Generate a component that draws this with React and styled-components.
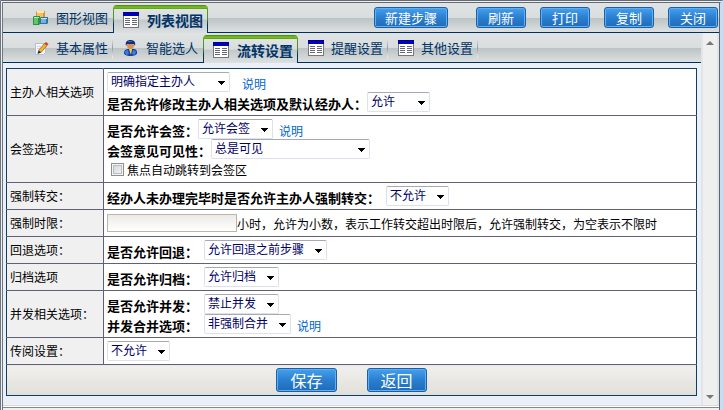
import React from 'react'
import styled, { createGlobalStyle, css } from 'styled-components'

const GlobalStyle = createGlobalStyle`
    * {
        box-sizing : border-box;
    }

    body {
        margin      : 0;
        background  : #ebeff8;
        font-family : "Noto Sans CJK SC", "Liberation Sans", sans-serif;
        font-size   : 12px;
        line-height : 20px;
        color       : #000;
    }
`;

const barGradient = 'linear-gradient(#dfe3e3, #d9dddd 50%, #bcc3c5 52%, #dde0e0)';

/* window frame */
const Frame = styled.div`
    display        : flex;
    flex-direction : column;
    min-height     : 100vh;
    border-top     : 3px double #666a72;
    border-left    : 3px double #70767e;
    border-right   : 3px solid #c9dcf0;
`;

const Inner = styled.div`
    flex           : 1;
    display        : flex;
    flex-direction : column;
    border-right   : 1px solid #5a6472;
`;

const Bar = styled.div`
    display         : flex;
    justify-content : space-between;
    height          : 30px;
    padding-left    : 20px;
    background      : ${barGradient};
    border-bottom   : 1px solid #003060;
`;

const Tabs = styled.nav`
    display : flex;
`;

const Tab = styled.a`
    display         : flex;
    align-items     : center;
    gap             : 7px;
    padding         : 0 5px 0 10px;
    font-size       : 13px;
    color           : #003366;
    text-decoration : none;
    white-space     : nowrap;

    ${({ $divider }) => $divider && css`
        background : linear-gradient(#e6eaea, #8e9cab 50%, #f0f2f2) no-repeat right 0 top 5px / 1px 20px;
    `}

    /* borders are painted by the second background, green fading to navy */
    ${({ $active }) => $active && css`
        gap           : 8px;
        margin        : 2px 0 -1px;
        padding       : 0 4px 3px 9px;
        font-size     : 14px;
        font-weight   : bold;
        background    :
            linear-gradient(#dfe3e3, #d9dddd 42%, #c2c8ca 46%, #dde0e0) padding-box,
            linear-gradient(#3f8010, #7fc226 2px, #5a9e10 4px, #4f8a30 50%, #00335f 70%) border-box;
        border        : 1px solid transparent;
        border-top    : 4px solid transparent;
        border-bottom : 0;
        border-radius : 4px 4px 0 0;
    `}
`;

const Tools = styled.div`
    display       : flex;
    align-items   : center;
    gap           : 14px;
    padding-right : 1px;
`;

const Button = styled.button`
    height        : 21px;
    padding       : 0 ${({ $lead }) => ($lead ? '10px' : '11px')};
    margin-right  : ${({ $lead }) => ($lead ? '14px' : '0')};
    font-family   : inherit;
    font-size     : 13px;
    line-height   : 17px;
    color         : #fff;
    white-space   : nowrap;
    background    : linear-gradient(#46a0ee, #2a7fd0 50%, #1f6cb8);
    border        : 1px solid #1a5fa8;
    border-radius : 3px;
    box-shadow    : inset 0 0 0 1px #5fb0f0;
`;

const BigButton = styled(Button)`
    height      : 24px;
    padding     : 0 13px;
    font-size   : 16px;
    line-height : 20px;
`;

const Body = styled.div`
    flex    : 1;
    display : flex;
`;

const Content = styled.main`
    flex           : 1;
    min-width      : 0;
    padding-bottom : 9px;
`;

const Scroll = styled.div`
    display         : flex;
    flex-direction  : column;
    justify-content : space-between;
    align-items     : center;
    width           : 18px;
    padding         : 8px 0 6px;
    background      : #efefef;
    border-left     : 2px solid #e2e4e6;
    border-right    : 2px solid #e4e4e6;
`;

const Status = styled.footer`
    height     : 5px;
    background : #f0f0f0;
    border-top : 1px solid #d8dade;
    box-shadow : inset 0 1px 0 #fff, inset 0 2px 0 #85888c;
`;

const FormBox = styled.form`
    padding : 5px 4px 0 3px;
`;

const Table = styled.table`
    width           : 100%;
    border          : 1px solid #0c3f66;
    border-collapse : collapse;
    background      : #fff;
`;

const Head = styled.th`
    width         : 97px;
    padding       : 3px;
    font-weight   : normal;
    text-align    : left;
    white-space   : nowrap;
    background    : #f0f0f0;
    border-right  : 1px solid #606078;
    border-bottom : 1px solid #606078;
`;

const Cell = styled.td`
    padding       : 3px;
    border-bottom : 1px solid #606078;
`;

const Foot = styled.td`
    height     : 30px;
    padding    : 3px;
    background : linear-gradient(#f1f0ed, #e2dfd9);
    border-top : 1px solid #0c3f66;
`;

const Actions = styled.div`
    display         : flex;
    justify-content : center;
    gap             : 30px;
`;

const Line = styled.div`
    display     : flex;
    align-items : center;
    height      : 20px;
    white-space : nowrap;
`;

const Strong = styled.label`
    padding-top  : 3px;
    margin-right : ${({ $gap }) => ($gap ? '6px' : '0')};
    font-size    : 13px;
    font-weight  : bold;
`;

const Help = styled.a`
    padding-top     : 3px;
    margin-left     : ${({ $far }) => ($far ? '12px' : '6px')};
    color           : #0066cc;
    text-decoration : none;
`;

const arrow = `url("data:image/svg+xml,%3Csvg xmlns='http://www.w3.org/2000/svg' width='7' height='4' shape-rendering='crispEdges'%3E%3Cpath d='M0 0h7v1H6v1H5v1H4v1H3V3H2V2H1V1H0z'/%3E%3C/svg%3E")`;

const Select = styled.select`
    appearance    : none;
    width         : ${({ $width }) => $width}px;
    height        : 20px;
    padding       : 0 0 2px 3px;
    font-family   : inherit;
    font-size     : 12px;
    line-height   : 16px;
    color         : #000066;
    background    : #fff ${arrow} no-repeat right 4px top 8px;
    border        : 1px solid #dde1ec;
    border-top    : 1px solid #a8a9b2;
    border-radius : 2px;
`;

const Hours = styled.input`
    width      : 130px;
    height     : 18px;
    padding    : 0 2px;
    font-size  : 12px;
    background : linear-gradient(#ebeae6, #fff);
    border     : 1px solid #bab6aa;
`;

const Note = styled.label`
    padding-top : 2px;
`;

const Check = styled.input`
    appearance : none;
    width      : 13px;
    height     : 13px;
    margin     : 0 3px 0 4px;
    background : linear-gradient(135deg, #cfd3d8, #f6f6f6);
    border     : 1px solid #8e8f8f;
    box-shadow : inset 0 0 0 1px #f4f4f4, inset 0 0 0 2px #b9bec4;
`;

/* icon */
const ListIcon = () => (
    <svg width="16" height="16" shapeRendering="crispEdges">
        <path fill="#fff" stroke="#777" d="M.5.5h15v15H.5z"/>
        <path fill="#0000c0" d="M0 0h16v4H0z"/>
        <path fill="#00007a" d="M0 0h16v1H0z"/>
        <path stroke="#667" d="M2 6.500h5M9 6.500h5M2 8.500h5M9 8.500h5M2 10.500h5M9 10.500h5M2 12.500h5M9 12.500h5"/>
    </svg>
)

const CubesIcon = () => (
    <svg width="16" height="16">
        <path fill="#d9962c" d="M3 2l1-1h8v7H3z"/>
        <path fill="#f5c060" d="M4 2h6v6H4z"/>
        <path fill="#ffe6a8" d="M4 1h7v2H4z"/>
        <path fill="#2a9440" d="M0 7l1-1h6v8l-1 1H0z"/>
        <path fill="#62c46c" d="M1 8h4v6H1z"/>
        <path fill="#b4ecb0" d="M1 7h5v1H1z"/>
        <path fill="#2f70a8" d="M7 8l1-1h7v6l-1 1H7z"/>
        <path fill="#74b4dc" d="M8 9h5v4H8z"/>
        <path fill="#c8e6f8" d="M8 8h6v1H8z"/>
    </svg>
)

const PencilIcon = () => (
    <svg width="16" height="16">
        <path fill="#f7f8ff" stroke="#b4bce0" d="M2.500 3.500h10v9l-2 2h-8z"/>
        <path stroke="#d0d6f0" d="M4 6.500h4M4 8.500h3M4 12.500h5"/>
        <path fill="#f5b52c" stroke="#8a5410" strokeWidth=".7" d="M5.500 10.500l6-7 2.500 2-6 7z"/>
        <path fill="#d83a30" d="M11.500 3.500l1.500-1.500 2.500 2L14 5.500z"/>
        <path fill="#222" d="M5.500 10.500l2.500 2-3.500 1.500z"/>
    </svg>
)

const UserIcon = () => (
    <svg width="16" height="16">
        <path fill="#123c9c" d="M1 13c0-3 2-4 4-4h5c3 0 4 1 4 4 0 2-3 3-6.500 3S1 15 1 13z"/>
        <path fill="#3f7ce0" d="M2 12c0-1 1-2 3-2l1 4-3 1zM13 12c0-1-1-2-3-2l-1 4 3 1z"/>
        <path fill="#e8e040" d="M6 9h3l-1 6z"/>
        <circle cx="7.500" cy="5.500" r="3.500" fill="#d89058"/>
        <path fill="#152c78" d="M3 6C2 2 4 0 7.500 0S13 2 12 6l-1-2H4z"/>
        <path fill="#3a62b8" d="M5 1h4v1H5z"/>
    </svg>
)

const Triangle = ({ down }) => (
    <svg width="8" height="4">
        <path fill="#777" d={down ? 'M0 0h8L4 4z' : 'M0 4h8L4 0z'}/>
    </svg>
)

const Choice = ({ id, width, value, label }) => (
    <Select id={id} $width={width} aria-label={label} defaultValue={value}>
        <option>{value}</option>
    </Select>
)

export default function App() {
    return (
        <Frame>
            <GlobalStyle/>
            <Inner>
                <Bar>
                    <Tabs>
                        <Tab href="#graph"><CubesIcon/>图形视图</Tab>
                        <Tab href="#list" $active><ListIcon/>列表视图</Tab>
                    </Tabs>
                    <Tools>
                        <Button $lead>新建步骤</Button>
                        <Button>刷新</Button>
                        <Button>打印</Button>
                        <Button>复制</Button>
                        <Button>关闭</Button>
                    </Tools>
                </Bar>
                <Body>
                    <Content>
                        <Bar>
                            <Tabs>
                                <Tab href="#base" $divider><PencilIcon/>基本属性</Tab>
                                <Tab href="#people"><UserIcon/>智能选人</Tab>
                                <Tab href="#flow" $active><ListIcon/>流转设置</Tab>
                                <Tab href="#remind" $divider><ListIcon/>提醒设置</Tab>
                                <Tab href="#other" $divider><ListIcon/>其他设置</Tab>
                            </Tabs>
                        </Bar>
                        <FormBox>
                            <Table>
                                <tbody>
                                    <tr>
                                        <Head scope="row">主办人相关选项</Head>
                                        <Cell>
                                            <Line>
                                                <Choice width={123} value="明确指定主办人" label="主办人相关选项"/>
                                                <Help href="#help" $far>说明</Help>
                                            </Line>
                                            <Line>
                                                <Strong htmlFor="modify">是否允许修改主办人相关选项及默认经办人：</Strong>
                                                <Choice id="modify" width={63} value="允许"/>
                                            </Line>
                                        </Cell>
                                    </tr>
                                    <tr>
                                        <Head scope="row">会签选项：</Head>
                                        <Cell>
                                            <Line>
                                                <Strong htmlFor="sign">是否允许会签：</Strong>
                                                <Choice id="sign" width={75} value="允许会签"/>
                                                <Help href="#help">说明</Help>
                                            </Line>
                                            <Line>
                                                <Strong htmlFor="visible">会签意见可见性：</Strong>
                                                <Choice id="visible" width={159} value="总是可见"/>
                                            </Line>
                                            <Line>
                                                <Check type="checkbox" id="focus"/>
                                                <Note htmlFor="focus">焦点自动跳转到会签区</Note>
                                            </Line>
                                        </Cell>
                                    </tr>
                                    <tr>
                                        <Head scope="row">强制转交：</Head>
                                        <Cell>
                                            <Line>
                                                <Strong htmlFor="force" $gap>经办人未办理完毕时是否允许主办人强制转交：</Strong>
                                                <Choice id="force" width={63} value="不允许"/>
                                            </Line>
                                        </Cell>
                                    </tr>
                                    <tr>
                                        <Head scope="row">强制时限：</Head>
                                        <Cell>
                                            <Line>
                                                <Hours type="text" id="hours"/>
                                                <Note htmlFor="hours">小时，允许为小数，表示工作转交超出时限后，允许强制转交，为空表示不限时</Note>
                                            </Line>
                                        </Cell>
                                    </tr>
                                    <tr>
                                        <Head scope="row">回退选项：</Head>
                                        <Cell>
                                            <Line>
                                                <Strong htmlFor="back" $gap>是否允许回退：</Strong>
                                                <Choice id="back" width={123} value="允许回退之前步骤"/>
                                            </Line>
                                        </Cell>
                                    </tr>
                                    <tr>
                                        <Head scope="row">归档选项</Head>
                                        <Cell>
                                            <Line>
                                                <Strong htmlFor="archive" $gap>是否允许归档：</Strong>
                                                <Choice id="archive" width={75} value="允许归档"/>
                                            </Line>
                                        </Cell>
                                    </tr>
                                    <tr>
                                        <Head scope="row">并发相关选项：</Head>
                                        <Cell>
                                            <Line>
                                                <Strong htmlFor="sync" $gap>是否允许并发：</Strong>
                                                <Choice id="sync" width={75} value="禁止并发"/>
                                            </Line>
                                            <Line>
                                                <Strong htmlFor="merge" $gap>并发合并选项：</Strong>
                                                <Choice id="merge" width={87} value="非强制合并"/>
                                                <Help href="#help">说明</Help>
                                            </Line>
                                        </Cell>
                                    </tr>
                                    <tr>
                                        <Head scope="row"><label htmlFor="read">传阅设置：</label></Head>
                                        <Cell>
                                            <Line>
                                                <Choice id="read" width={63} value="不允许"/>
                                            </Line>
                                        </Cell>
                                    </tr>
                                </tbody>
                                <tfoot>
                                    <tr>
                                        <Foot colSpan={2}>
                                            <Actions>
                                                <BigButton type="button">保存</BigButton>
                                                <BigButton type="button">返回</BigButton>
                                            </Actions>
                                        </Foot>
                                    </tr>
                                </tfoot>
                            </Table>
                        </FormBox>
                    </Content>
                    <Scroll>
                        <Triangle/>
                        <Triangle down/>
                    </Scroll>
                </Body>
                <Status/>
            </Inner>
        </Frame>
    )
}
